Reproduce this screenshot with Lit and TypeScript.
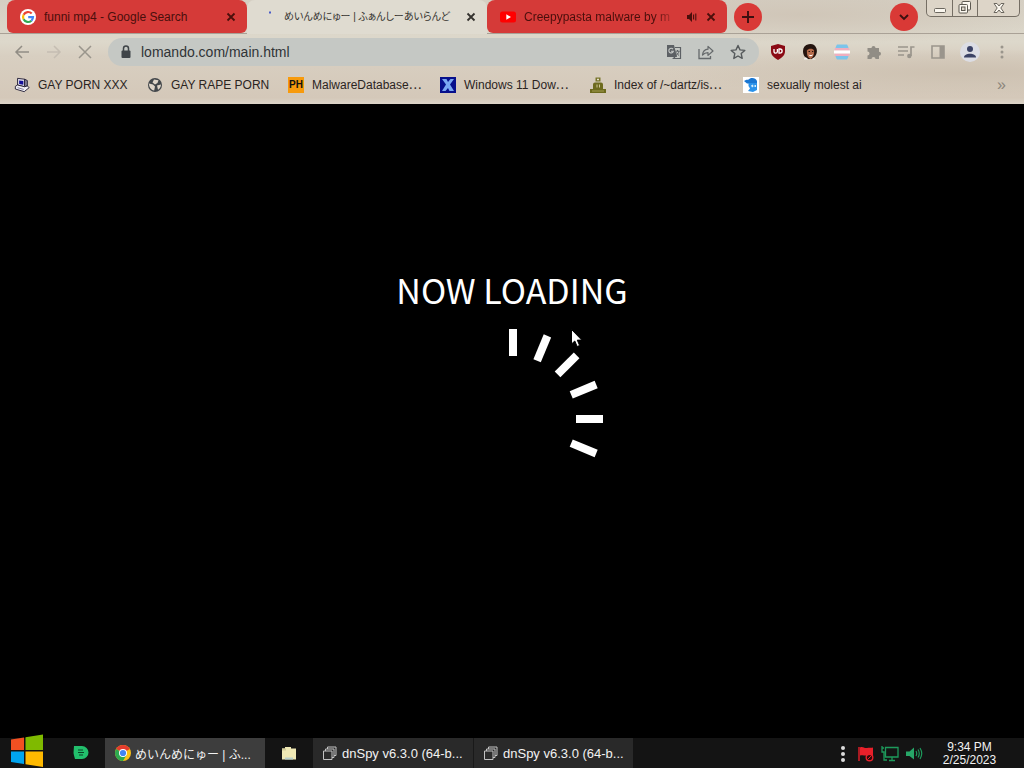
import { LitElement, html, css, svg, TemplateResult } from "lit";
import { customElement, property } from "lit/decorators.js";

const box = (size: number, view: string, body: TemplateResult) =>
  html`<svg width=${size} height=${size} viewBox=${view} aria-hidden="true">${body}</svg>`;

const closeGlyph = box(10, "0 0 10 10", svg`<path d="M1.5 1.5l7 7M8.5 1.5l-7 7" stroke="currentColor" stroke-width="1.8" fill="none"/>`);

const icons = {
  google: box(16, "0 0 16 16", svg`
    <circle cx="8" cy="8" r="8" fill="#fff"/>
    <g fill="none" stroke-width="2.2">
      <path d="M11.7 4.6A5 5 0 0 0 3.6 5.7" stroke="#ea4335"/>
      <path d="M3.6 5.7a5 5 0 0 0 0 4.6" stroke="#fbbc05"/>
      <path d="M3.6 10.3a5 5 0 0 0 7.8 1.4" stroke="#34a853"/>
      <path d="M11.4 11.7A5 5 0 0 0 13 8.1H8.2" stroke="#4285f4"/>
    </g>`),
  loading: box(16, "0 0 16 16", svg`<path d="M9 2.5h2v2H9z" fill="#4a5cc8"/>`),
  youtube: box(16, "0 0 16 16", svg`<rect y="2.5" width="16" height="11" rx="2.5" fill="#f00"/><path d="M6.3 5.3v5.4L11 8z" fill="#fff"/>`),
  speaker: box(12, "0 0 12 12", svg`<path d="M1 4h2l3-3v10L3 8H1z" fill="currentColor"/><path d="M7.6 3.5v5M9.8 2.5v7" stroke="currentColor" stroke-width="1.1"/>`),
  back: box(16, "0 0 16 16", svg`<path d="M15 8H2M8 2L2 8l6 6" fill="none" stroke="#918d85" stroke-width="1.5"/>`),
  forward: box(16, "0 0 16 16", svg`<path d="M1 8h13M8 2l6 6-6 6" fill="none" stroke="#c5bdb2" stroke-width="1.5"/>`),
  stop: box(14, "0 0 14 14", svg`<path d="M1 1l12 12M13 1L1 13" fill="none" stroke="#99958c" stroke-width="1.5"/>`),
  lock: box(14, "0 0 14 14", svg`<rect x="2.5" y="5.5" width="9" height="7.5" rx="1" fill="#3f4448"/><path d="M4.5 6V3.6a2.5 2.5 0 0 1 5 0V6" fill="none" stroke="#3f4448" stroke-width="1.5"/>`),
  translate: box(16, "0 0 16 16", svg`
    <path d="M1 1h7l3 12H1z" fill="#5c6064"/>
    <path d="M9 3.5h5.5v11H7.5l1.5-1.5" fill="none" stroke="#5c6064" stroke-width="1.2"/>
    <path d="M7 5.2A2.3 2.3 0 1 0 7.4 7.200H5" fill="none" stroke="#c5c8c6" stroke-width="1.1"/>
    <path d="M9.500 7.200h4M11.500 6v1.200M13 7.200c-.5 2-1.500 3.200-3 4.300M10.500 8.500c.6 1.400 1.500 2.300 2.500 3" stroke="#5c6064" fill="none"/>`),
  share: box(16, "0 0 16 16", svg`
    <path d="M1 5v9.500h11.500V12" fill="none" stroke="#65696b" stroke-width="1.3"/>
    <path d="M4.500 11c.4-3.800 2.300-5.600 5.500-5.800V2.400L15 7l-5 4.400V8.600c-2.600 0-4 .7-5.500 2.400z" fill="none" stroke="#65696b" stroke-width="1.200" stroke-linejoin="round"/>`),
  star: box(16, "0 0 16 16", svg`<path d="M8 1.500l2 4.400 4.800.5-3.600 3.200 1 4.800L8 12l-4.200 2.400 1-4.800L1.200 6.400 6 5.900z" fill="none" stroke="#55595b" stroke-width="1.400" stroke-linejoin="round"/>`),
  shield: box(16, "0 0 16 16", svg`
    <path d="M8 0l7 2v5c0 4-2.500 6.500-7 9-4.500-2.500-7-5-7-9V2z" fill="#8a0a14"/>
    <path d="M4 5v2.500a1.700 1.700 0 0 0 3.400 0V5M9 5v4.200h1a2 2 0 0 0 0-4.200z" fill="none" stroke="#fff" stroke-width="1.300"/>`),
  face: box(16, "0 0 16 16", svg`
    <path d="M1 7a7 7 0 0 1 13.500-2.500c1 3 0 6-1.500 8L10 15H6C2 13 1 10 1 7z" fill="#24140f"/>
    <path d="M5 6.500C6 4.500 11 4 12 6.500c.6 3-.5 6-3 8.500-3-.8-4.500-4-4-8.500z" fill="#b56b4b"/>
    <path d="M6.500 7.500h1.500M10 7.500h1.300" stroke="#2a1510"/>
    <path d="M6.500 10.500c1.500.8 3 .8 4.500-.3-.3 2.300-3.500 2.800-4.500.3z" fill="#fff"/>
    <path d="M2 14.500c2-2 3-1 4 1H2zM11 14l3 1.500h-4z" fill="#f0f0ee"/>`),
  flag: box(16, "0 0 16 16", svg`
    <path d="M3 .5h10a8 8 0 0 1 1.500 3.500h-13A8 8 0 0 1 3 .5zM1.500 12h13A8 8 0 0 1 13 15.500H3A8 8 0 0 1 1.500 12z" fill="#7cc4ea"/>
    <path d="M1 4h14l.6 2.500H.4zM.4 9.500h15.200L15 12H1z" fill="#f0aebf"/><path d="M0 6.500h16v3H0z" fill="#fff"/>`),
  puzzle: box(16, "0 0 16 16", svg`<path d="M1.500 4h4a2 2 0 1 1 4 0h3.500v3.800a2 2 0 1 1 0 4V15H9.500a2 2 0 1 0-4 0h-4v-3.500a2 2 0 1 0 0-4z" fill="#918d85"/>`),
  queue: box(18, "0 0 18 18", svg`<path d="M1 4h10M1 8h10M1 12h6M14 13V4h3.500" fill="none" stroke="#9a958c" stroke-width="1.700"/><circle cx="12.300" cy="13" r="2.200" fill="#9a958c"/>`),
  panel: box(16, "0 0 16 16", svg`<path d="M2 2h12v12H2z" fill="none" stroke="#9a958c" stroke-width="1.600"/><path d="M9.500 2H14v12H9.500z" fill="#9a958c"/>`),
  profile: box(20, "0 0 20 20", svg`<circle cx="10" cy="10" r="10" fill="#dcdde4"/><circle cx="10" cy="7" r="3" fill="#3b4265"/><path d="M4 15.500c0-5 12-5 12 0z" fill="#3b4265"/>`),
  more: box(16, "0 0 16 16", svg`<g fill="#9a958c"><circle cx="8" cy="3" r="1.500"/><circle cx="8" cy="8" r="1.500"/><circle cx="8" cy="13" r="1.500"/></g>`),
  plus: box(14, "0 0 14 14", svg`<path d="M7 1v12M1 7h12" stroke="#3b1010" stroke-width="1.900"/>`),
  chevron: box(12, "0 0 12 12", svg`<path d="M2 4l4 4 4-4" fill="none" stroke="#3b1010" stroke-width="1.900"/>`),
  minimize: box(16, "0 0 16 16", svg`<rect x="2.500" y="8.500" width="11" height="4" rx="1" fill="#fbf7ef" stroke="#6b675f"/>`),
  restore: box(16, "0 0 16 16", svg`
    <rect x="5" y="1.500" width="8.500" height="8.500" rx="1" fill="#fbf7ef" stroke="#5d5951"/>
    <rect x="2" y="4.500" width="8.500" height="8.500" rx="1" fill="#fbf7ef" stroke="#5d5951"/>
    <rect x="4.500" y="7" width="3.500" height="3.500" fill="#ddd5c8" stroke="#5d5951"/>`),
  exit: box(16, "0 0 16 16", svg`<path d="M3 3.500h3L8 6l2-2.500h3L9.800 8l3.200 4.500h-3L8 10l-2 2.500H3L6.200 8z" fill="#fbf7ef" stroke="#6b675f"/>`),
  computer: box(18, "0 0 18 18", svg`
    <path d="M4 1.500l8 1v8.500l-8-2z" fill="#dedbe8" stroke="#1c1830"/><path d="M5.800 3.800l4.700.7v4.300l-4.700-1z" fill="#15109a"/>
    <path d="M12 2.500l3 1.500v6L12 11z" fill="#8a86a0" stroke="#1c1830"/>
    <path d="M1.500 10.500L4 9l8 2 3-1 2 2-5.500 4.500-10-3z" fill="#f1eff4" stroke="#1c1830"/><path d="M4 12l7 2" stroke="#77739a"/>`),
  globe: box(16, "0 0 16 16", svg`<circle cx="8" cy="8" r="7" fill="#43474b"/>
    <path d="M2 6.500l4 1 2 2-.8 4C4 13 2 10.500 2 6.500zM7 2.500l4.500.8-1 2.700L8 7.500 5.500 5.500zM10 8.500l4-1c0 2.500-1.500 4.500-3 5.300z" fill="#ded4c8"/>`),
  ph: html`<span class="ph">PH</span>`,
  bluex: box(16, "0 0 16 16", svg`<path d="M0 0h16v16H0z" fill="#07108c"/><path d="M2 2h4.500L8 5l2.500-3H14l-4 5.500 4 6.500H9.500L8 11l-2.500 3H2l4-6.500z" fill="#79a7f3"/>`),
  apache: box(16, "0 0 16 16", svg`<path d="M5.500.5h5v4h-5z" fill="#77742a"/><path d="M7 1.800h2v1.400H7z" fill="#e8dfcc"/>
    <path d="M5 5.500h6a2 2 0 0 1 2 2V12h3v4H0v-4h3V7.500a2 2 0 0 1 2-2z" fill="#6d6a1d"/><path d="M6.500 7.500h1v3h-1zM9 7.500h1v3H9z" fill="#d2c898"/><path d="M2 14h12" stroke="#a39c50"/>`),
  bird: box(16, "0 0 16 16", svg`<path d="M0 0h16v16H0z" fill="#fff"/><path d="M1 4c3-2 4-.5 6-2.500 3-1 6 0 7 2.500v2.500H4z" fill="#1976d2"/><path d="M5.500 6H14v7l-4 2-5-1 2-2.500L5.500 9z" fill="#2a92ea"/><path d="M8 8.500l2-1 .5 2-1.500 1zM11.500 8h1.500v2h-1.500z" fill="#d5eefc"/>`),
  windows: box(34, "0 0 34 34", svg`<path d="M1 5.500l13-2v12.500H1z" fill="#f25022"/><path d="M15.500 3.300L33 .5V16H15.500z" fill="#7fba00"/><path d="M1 17.500h13V30L1 28z" fill="#00a4ef"/><path d="M15.500 17.500H33v15.500l-17.500-2.800z" fill="#ffb900"/>`),
  chrome: box(16, "0 0 16 16", svg`<circle cx="8" cy="8" r="8" fill="#fbc116"/><path d="M8 8L1.100 4A8 8 0 0 1 14.900 4z" fill="#e33b2e"/><path d="M8 8L1.100 4A8 8 0 0 0 8 16l3.500-6z" fill="#2da94f"/><circle cx="8" cy="8" r="4" fill="#fff"/><circle cx="8" cy="8" r="3.100" fill="#4285f4"/>`),
  deezer: box(16, "0 0 16 16", svg`<path d="M1 1h8a6.500 6.500 0 0 1 0 13H2l-1-3.500L.5 8z" fill="#22bf6c"/><path d="M5 5h5M5 7.500h6M6 10h4" stroke="#0b4427" stroke-width="1.200"/>`),
  folder: box(16, "0 0 16 16", svg`<path d="M1 3.500h3V2h6v1.500h5V14.500H1z" fill="#efe8b4"/><path d="M1 3.500h4v2H1z" fill="#d3cc9a"/><path d="M4 12.500h8v2H4z" fill="#b9d0cc"/>`),
  stack: box(14, "0 0 14 14", svg`<g fill="#2c2c2c" stroke="#c2c2c2"><path d="M4.500 1h8.500v8.500H4.500z"/><path d="M2.500 3h8.500v8.500H2.500z"/><path d="M.5 5h8.500v8.500H.5z"/></g>`),
  dots: box(16, "0 0 16 16", svg`<g fill="#dcdcdc"><circle cx="8" cy="2" r="2"/><circle cx="8" cy="8" r="2"/><circle cx="8" cy="14" r="2"/></g>`),
  redflag: box(18, "0 0 18 18", svg`<path d="M2 2v14" stroke="#d81d27" stroke-width="1.500"/><path d="M3 2.500c3-1.500 4 1 7 .5 2-.5 3 0 6-.5v8c-3 .5-4-.5-6 0-3 .5-4-1-7 0z" fill="#e8202a"/><circle cx="12.500" cy="12.500" r="3.300" fill="#33090b" stroke="#e8202a" stroke-width="1.400"/><path d="M10.500 14.500l4-4" stroke="#e8202a"/>`),
  network: box(18, "0 0 18 18", svg`<path d="M4.500 2.500H17v9.500H4.500zM8 15.500h6M11 12v3.500M1 1v6h2v8h3M1 3h2" fill="none" stroke="#1d9a5b" stroke-width="1.300"/>`),
  volume: box(18, "0 0 18 18", svg`<path d="M1 6.500h3.500L9 2.500v12L4.500 11H1z" fill="#27a768"/><path d="M11 6c1 1.700 1 3.300 0 5M13 4.500c1.700 2.700 1.700 5.300 0 8M15 3c2.400 3.800 2.400 7.200 0 11" fill="none" stroke="#1d9a5b" stroke-width="1.200"/>`),
  cursor: html`<svg width="12" height="19" viewBox="0 0 12 19" aria-hidden="true"><path d="M.5.500v14.500l3.300-3 2.300 5.500 2.500-1-2.300-5.400h4.500z" fill="#fff" stroke="#000"/></svg>`,
};

const family = css`font-family: "Liberation Sans", "Noto Sans CJK JP", sans-serif;`;

const reset = css`
  :host, * { box-sizing: border-box; }
  svg { display: block; flex: none; }
  button { ${family} display: flex; align-items: center; justify-content: center; border: 0; margin: 0; padding: 0; background: none; color: inherit; }
  a { color: inherit; text-decoration: none; }
`;

const tabs = [
  { icon: icons.google, title: "funni mp4 - Google Search", active: false, audio: false, kana: false },
  { icon: icons.loading, title: "めいんめにゅー | ふぁんしーあいらんど", active: true, audio: false, kana: true },
  { icon: icons.youtube, title: "Creepypasta malware by m", active: false, audio: true, kana: false },
];

const bookmarks = [
  { icon: icons.computer, label: "GAY PORN XXX" },
  { icon: icons.globe, label: "GAY RAPE PORN" },
  { icon: icons.ph, label: "MalwareDatabase⋯" },
  { icon: icons.bluex, label: "Windows 11 Dow⋯" },
  { icon: icons.apache, label: "Index of /~dartz/is⋯" },
  { icon: icons.bird, label: "sexually molest ai" },
];

@customElement("browser-tabs")
export class BrowserTabs extends LitElement {
  static styles = [reset, css`
    :host { display: flex; height: 34px; padding-left: 7px; border-bottom: 1px solid #a9a196; color: #4a0f0c; }
    .tab { display: flex; flex: 0 1 240px; min-width: 0; align-items: center; gap: 8px; height: 33px; padding: 0 11px 0 13px; border-radius: 8px 8px 6px 6px; background: #d53a38; font-size: 12px; line-height: 16px; }
    .tab.active { height: 34px; margin-bottom: -1px; background: #dfdbd0; color: #34322e; border-radius: 8px 8px 0 0; }
    .title { flex: 1; min-width: 0; overflow: hidden; white-space: nowrap; }
    .title.kana { font-size: 10px; font-feature-settings: "palt"; }
    .title.fade { -webkit-mask-image: linear-gradient(to left, transparent, #000 24px); mask-image: linear-gradient(to left, transparent, #000 24px); }
    .round { width: 28px; height: 28px; border-radius: 50%; background: #d93936; align-self: center; flex: none; }
    .new { margin-left: 7px; }
    .search { margin-left: auto; margin-right: 8px; }
    .controls { display: flex; height: 17px; margin-right: 4px; border: 1px solid #756e64; border-top: 0; border-radius: 0 0 5px 5px; background: #ddd5c8; }
    .controls button { width: 25px; }
    .controls button + button { border-left: 1px solid #756e64; }
    .controls button:last-child { width: 42px; }
  `];
  render() {
    return html`
      ${tabs.map(t => html`<div class="tab ${t.active ? "active" : ""}" role="tab" aria-selected=${t.active}>
        ${t.icon}<span class="title ${t.kana ? "kana" : ""} ${t.audio ? "fade" : ""}">${t.title}</span>
        ${t.audio ? icons.speaker : ""}<button aria-label="Close tab">${closeGlyph}</button>
      </div>`)}
      <button class="round new" aria-label="New tab">${icons.plus}</button>
      <button class="round search" aria-label="Search tabs">${icons.chevron}</button>
      <div class="controls">
        <button aria-label="Minimize">${icons.minimize}</button>
        <button aria-label="Restore">${icons.restore}</button>
        <button aria-label="Close">${icons.exit}</button>
      </div>`;
  }
}

@customElement("browser-toolbar")
export class BrowserToolbar extends LitElement {
  static styles = [reset, css`
    :host { display: flex; align-items: center; height: 36px; padding: 0 14px; }
    .nav { display: flex; gap: 16px; width: 94px; align-items: center; }
    .address { display: flex; flex: 1; align-items: center; gap: 16px; height: 28px; padding: 0 13px 0 11px; border-radius: 14px; background: #c5c8c4; }
    .address input { ${family} flex: 1; min-width: 0; margin-left: -8px; padding: 0; border: 0; outline: 0; background: none; color: #303437; font-size: 14px; }
    .extensions { display: flex; gap: 16px; align-items: center; margin-left: 11px; }
    .extensions button { width: 16px; height: 20px; }
  `];
  render() {
    return html`
      <div class="nav">
        <button aria-label="Back">${icons.back}</button>
        <button aria-label="Forward">${icons.forward}</button>
        <button aria-label="Stop">${icons.stop}</button>
      </div>
      <div class="address">
        ${icons.lock}<input aria-label="Address" .value=${"lomando.com/main.html"}>
        <button aria-label="Translate">${icons.translate}</button>
        <button aria-label="Share">${icons.share}</button>
        <button aria-label="Bookmark">${icons.star}</button>
      </div>
      <div class="extensions">
        ${["shield", "face", "flag", "puzzle", "queue", "panel", "profile", "more"].map(n =>
          html`<button aria-label=${n}>${icons[n as keyof typeof icons]}</button>`)}
      </div>`;
  }
}

@customElement("bookmark-bar")
export class BookmarkBar extends LitElement {
  static styles = [reset, css`
    :host { display: grid; grid-template-columns: 133px 141px 152px 150px 153px 1fr auto; align-items: center; height: 34px; padding: 0 18px 4px 14px; color: #2b241f; font-size: 12px; line-height: 16px; }
    .mark { display: flex; align-items: center; gap: 8px; white-space: nowrap; }
    .mark svg { width: 16px; }
    .ph { display: block; width: 16px; height: 16px; background: #f79a0c; color: #111; font: 900 10px/16px "Liberation Sans", sans-serif; text-align: center; }
    .overflow { color: #8b857b; font-size: 16px; }
  `];
  render() {
    return html`${bookmarks.map(b => html`<a class="mark" href="#">${b.icon}<span>${b.label}</span></a>`)}
      <button class="overflow" aria-label="More bookmarks">»</button>`;
  }
}

@customElement("loading-page")
export class LoadingPage extends LitElement {
  static styles = [reset, css`
    :host { display: flex; flex-direction: column; align-items: center; position: relative; padding-top: 161px; background: #000; color: #fff; overflow: hidden; }
    h1 { margin: 0; font: 400 34px/50px "Noto Sans CJK JP", sans-serif; }
    .spinner { margin-top: 14px; margin-left: 2px; }
    .pointer { position: absolute; left: calc(50% + 59px); top: 225px; }
  `];
  render() {
    return html`<h1>NOW LOADING</h1>
      <div class="spinner" role="progressbar" aria-label="Loading">
        <svg width="180" height="180" viewBox="0 0 180 180">
          ${[0, 22.5, 45, 67.5, 90, 112.5].map(a => svg`<rect x="86" y="0" width="8" height="27" fill="#fff" transform="rotate(${a} 90 90)"/>`)}
        </svg>
      </div>
      <div class="pointer">${icons.cursor}</div>`;
  }
}

@customElement("task-bar")
export class TaskBar extends LitElement {
  @property({ type: String }) time = "9:34 PM";
  @property({ type: String }) date = "2/25/2023";
  static styles = [reset, css`
    :host { display: flex; position: relative; height: 30px; background: #141414; color: #f2f2f2; }
    .start { width: 57px; height: 34px; margin-top: -4px; padding-right: 4px; }
    .pin { width: 48px; }
    .task { width: 160px; justify-content: flex-start; gap: 5px; padding-left: 10px; background: #292929; font-size: 13px; white-space: nowrap; }
    .task + .task { border-left: 1px solid #191919; }
    .task.current { background: #3d3d3d; gap: 4px; font-size: 12px; }
    .tray { display: flex; align-items: center; gap: 6px; margin-left: auto; padding-top: 2px; }
    .clock { width: 81px; margin: 3px 14px 0 6px; text-align: center; font-size: 12px; line-height: 13px; }
  `];
  render() {
    return html`
      <button class="start" aria-label="Start">${icons.windows}</button>
      <button class="pin" aria-label="Music">${icons.deezer}</button>
      <button class="task current">${icons.chrome}<span>めいんめにゅー | ふ...</span></button>
      <button class="pin" aria-label="Files">${icons.folder}</button>
      <button class="task">${icons.stack}<span>dnSpy v6.3.0 (64-b...</span></button>
      <button class="task">${icons.stack}<span>dnSpy v6.3.0 (64-b...</span></button>
      <div class="tray">${icons.dots}${icons.redflag}${icons.network}${icons.volume}</div>
      <div class="clock"><div>${this.time}</div><div>${this.date}</div></div>`;
  }
}

@customElement("app-root")
export class AppRoot extends LitElement {
  static styles = css`
    :host { display: flex; flex-direction: column; height: 100vh; background: #000; ${family} }
    header { background: radial-gradient(ellipse 260px 30px at 78% 14%, #d0c6b8, transparent), radial-gradient(ellipse 300px 24px at 94% 70%, #cdc1b1, transparent), linear-gradient(#d5cfc3, #ddd8cb 40%, #d8cfc1 54%, #d4c8b9 94%, #dcd4c8); }
    loading-page { flex: 1; }
  `;
  render() {
    return html`<header><browser-tabs></browser-tabs><browser-toolbar></browser-toolbar><bookmark-bar></bookmark-bar></header>
      <loading-page></loading-page>
      <task-bar></task-bar>`;
  }
}
